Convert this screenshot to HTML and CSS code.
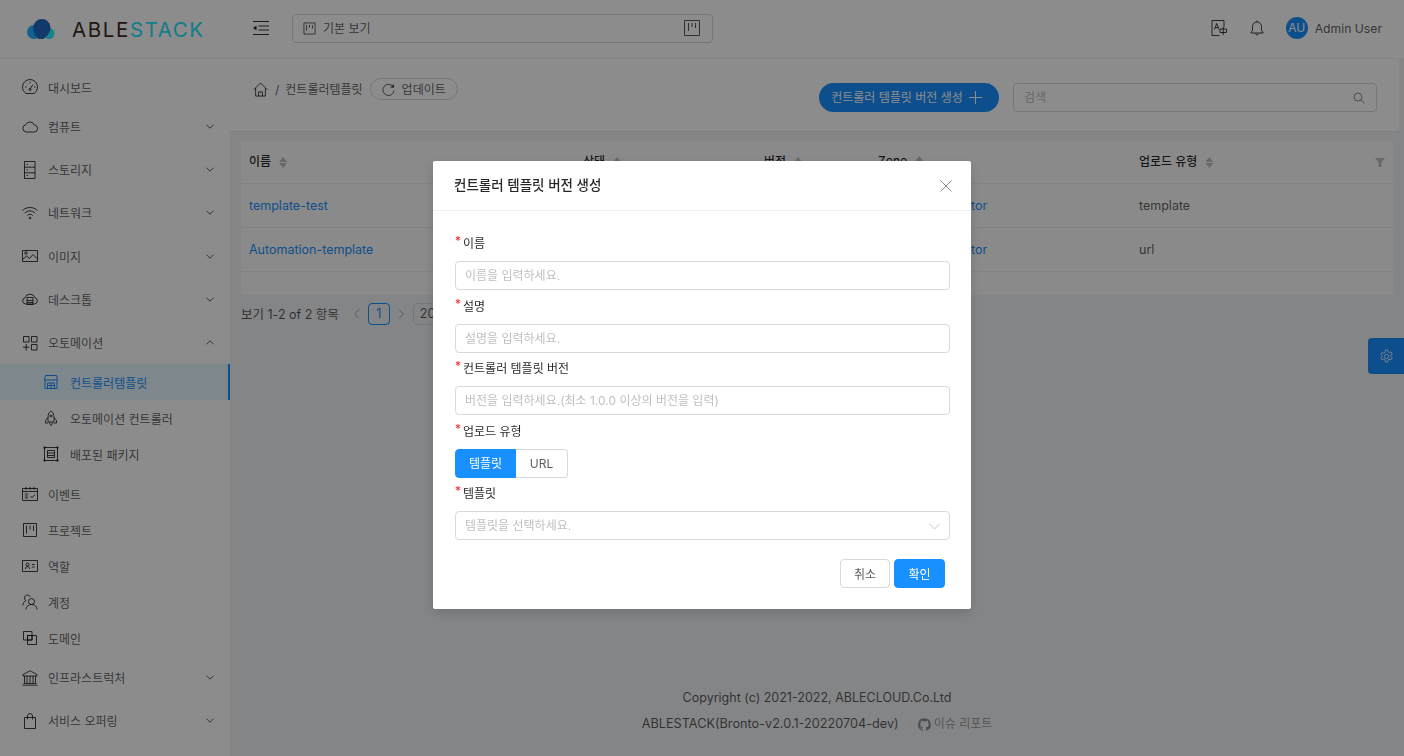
FILE: index.html
```html
<!DOCTYPE html>
<html lang="ko">
<head>
  <meta charset="UTF-8" />
  <title>ABLESTACK</title>
  <link rel="stylesheet" href="styles.css">
</head>
<body>

<div class="layout">
  <aside class="sider">
    <div class="logo">
      <svg class="logo-cloud" viewBox="0 0 28 20">
        <circle cx="7" cy="13" r="7" fill="#26b0ff"/>
        <circle cx="22" cy="14.500" r="5.500" fill="#2af0ff"/>
        <path d="M15 0a8.500 8.500 0 0 1 8.500 8.500c0 4.500-3 8.500-7 11.500h-5C8 17 6.200 13 6.200 8.500A8.800 8.800 0 0 1 15 0z" fill="#2168c3"/>
      </svg>
      <span class="logo-text">ABLE<span class="logo-accent">STACK</span></span>
    </div>
    <nav class="menu">
      <a class="item">
        <svg class="icon" viewBox="0 0 16 16"><path d="M4 14.500h8c1.700-1.100 3.500-3.300 3.500-6.500a7.500 7.500 0 0 0-15 0c0 3.200 1.800 5.400 3.500 6.500z"/><path d="M8 10l3-4.500M3 8h1.500M12 8h1.500M5 4.500l.6.6M8 2.800v1.400"/><circle cx="8" cy="10.500" r="1"/></svg>
        대시보드
      </a>
      <a class="item group">
        <svg class="icon" viewBox="0 0 16 16"><path d="M4.300 13a3.700 3.700 0 0 1-.5-7.300 4.600 4.600 0 0 1 8.500.3 3.500 3.500 0 0 1-.5 7z"/></svg>
        컴퓨트
        <svg class="caret" viewBox="0 0 8 5"><path d="M.5.700L4 4.200 7.500.700"/></svg>
      </a>
      <a class="item group">
        <svg class="icon" viewBox="0 0 16 16"><path d="M2.500 -.5h10.500v17h-10.500zM2.500 5.200h10.500M2.500 10.800h10.500M4.500 2.500h1.500M4.500 8h1.500M4.500 13.500h1.500"/></svg>
        스토리지
        <svg class="caret" viewBox="0 0 8 5"><path d="M.5.700L4 4.200 7.500.700"/></svg>
      </a>
      <a class="item group">
        <svg class="icon" viewBox="0 0 16 16"><path d="M.5 5.500c4-4 11-4 15 0M2.800 8c3-2.800 7.400-2.800 10.400 0M5.200 10.300c1.700-1.300 3.900-1.300 5.600 0"/><circle cx="8" cy="13" r=".9"/></svg>
        네트워크
        <svg class="caret" viewBox="0 0 8 5"><path d="M.5.700L4 4.200 7.500.700"/></svg>
      </a>
      <a class="item group">
        <svg class="icon" viewBox="0 0 16 16"><path d="M.5 2.500h15v11H.5zM.5 11.500l4-3.500 3 2.500 3.500-4 4.500 4.500"/><circle cx="4" cy="5" r="1.200"/></svg>
        이미지
        <svg class="caret" viewBox="0 0 8 5"><path d="M.5.700L4 4.200 7.500.700"/></svg>
      </a>
      <a class="item group">
        <svg class="icon" viewBox="0 0 16 16"><path d="M3.500 13a3.200 3.200 0 0 1-.3-6.300 5 5 0 0 1 9.600 0 3.200 3.200 0 0 1-.3 6.300z"/><path d="M5 6.500h6v7H5zM5 9.500h6M5 11.500h6"/></svg>
        데스크톱
        <svg class="caret" viewBox="0 0 8 5"><path d="M.5.700L4 4.200 7.500.700"/></svg>
      </a>
      <a class="item group">
        <svg class="icon" viewBox="0 0 16 16"><path d="M1.500 1.500h5.500v5.500H1.500zM9.500 1.500h5.500v5.500H9.500zM9.500 9.500h5.500v5.500H9.500zM1 12.200h6.500M4.200 9v6.500"/></svg>
        오토메이션
        <svg class="caret" viewBox="0 0 8 5"><path d="M.5 4.300L4 .8l3.500 3.500"/></svg>
      </a>
      <div class="submenu">
        <a class="item sub active">
          <svg class="icon" viewBox="0 0 16 16"><path d="M2.500 1.500h11l1 4.500h-13zM2 6v8.500h12V6M4.500 9h7v5.500h-7zM4.500 11.500h7M8 9v5.500"/></svg>
          컨트롤러템플릿
        </a>
        <a class="item sub">
          <svg class="icon" viewBox="0 0 16 16"><path d="M8 .8C5.800 2.500 5 5 5 7.500V12h6V7.500C11 5 10.200 2.500 8 .8zM5 7.500L2.500 10.500V13H5M11 7.500l2.500 3V13H11M6.500 12.500c.2 1.200.8 2.200 1.500 3 .7-.8 1.300-1.800 1.500-3"/><circle cx="8" cy="6" r="1"/></svg>
          오토메이션 컨트롤러
        </a>
        <a class="item sub">
          <svg class="icon" viewBox="0 0 16 16"><path d="M1.500 1.500h13v13h-13zM4.500 4.500h7v7h-7zM4.500 7h7M4.500 9.500h7"/><path class="solid" d="M.5.500h2v2h-2zM13.500.5h2v2h-2zM.5 13.500h2v2h-2zM13.500 13.500h2v2h-2z"/></svg>
          배포된 패키지
        </a>
      </div>
      <a class="item">
        <svg class="icon" viewBox="0 0 16 16"><path d="M.5 2.500h15v12H.5zM.5 5.500h15M4 .8v3M8 .8v3M12 .8v3M2.800 8h3.500M2.800 10h3M2.800 12h3.500M8.300 10l1.700 1.800 3-3.300"/></svg>
        이벤트
      </a>
      <a class="item">
        <svg class="icon" viewBox="0 0 16 16"><path d="M1.500 1.500h13v13h-13zM4.500 3.500v8M8 3.500v4M11.500 3.500v5.500"/></svg>
        프로젝트
      </a>
      <a class="item">
        <svg class="icon" viewBox="0 0 16 16"><path d="M.5 2.500h15v11H.5zM3.500 11c0-1.800 1-2.600 2-2.600s2 .8 2 2.600M9.800 6.500h3M9.800 9h3"/><circle cx="5.500" cy="6.500" r="1.500"/></svg>
        역할
      </a>
      <a class="item">
        <svg class="icon" viewBox="0 0 16 16"><circle cx="9.500" cy="7.500" r="3"/><path d="M3.800 15.500c.3-3 2.600-5 5.700-5s5.400 2 5.700 5M8.300 3C7.800 1.700 6.800 1 5.500 1c-1.700 0-3 1.300-3 3 0 1 .5 2 1.300 2.500C2 7.500 1 9.500.8 11.500"/></svg>
        계정
      </a>
      <a class="item">
        <svg class="icon" viewBox="0 0 16 16"><path d="M1.500 1.500h8.500v8.500H1.500zM5.500 5.500h9v9h-9zM5.500 5.500h4.500V10H5.500z"/></svg>
        도메인
      </a>
      <a class="item group">
        <svg class="icon" viewBox="0 0 16 16"><path d="M8 .8L1 4.500v1.500h14V4.500zM2.500 6v7M5 6v7M8 6v7M11 6v7M13.500 6v7M1.500 13.500h13M.5 15.200h15"/></svg>
        인프라스트럭처
        <svg class="caret" viewBox="0 0 8 5"><path d="M.5.700L4 4.200 7.500.700"/></svg>
      </a>
      <a class="item group">
        <svg class="icon" viewBox="0 0 16 16"><path d="M2.500 4.500h11v11h-11zM5.500 6.500V3a2.500 2.500 0 0 1 5 0v3.500"/></svg>
        서비스 오퍼링
        <svg class="caret" viewBox="0 0 8 5"><path d="M.5.700L4 4.200 7.500.700"/></svg>
      </a>
    </nav>
  </aside>

  <main class="main">
    <header class="topbar">
      <svg class="collapse" viewBox="0 0 16 14"><path d="M0 .5h16M5.500 5h10.500M5.500 9h10.500M0 13.500h16"/><path class="solid" d="M3.500 4.500v5L0 7z"/></svg>
      <div class="view-select">
        <svg class="icon-small" viewBox="0 0 14 14"><path d="M1 1h12v12H1zM3.800 3.200v6M7 3.200v3M10.200 3.200v4"/></svg>
        <span>기본 보기</span>
        <svg class="view-icon" viewBox="0 0 16 16"><path d="M.5.500h15v15H.5zM4.500 3v8M8 3v4M11.500 3v5"/></svg>
      </div>
      <div class="top-actions">
        <svg class="icon translate" viewBox="0 0 16 16"><path d="M13 7V.5H1V15.500h7.500"/><path d="M3.500 9.500L5.700 3.500 8 9.500M4.300 7.600h2.800M9 9h6.500v3.500H9zM12.200 7v8"/></svg>
        <svg class="icon bell" viewBox="0 0 16 16"><path d="M2 13h12v-.8l-1.500-1.700V6.500A4.500 4.500 0 0 0 8 2a4.500 4.500 0 0 0-4.500 4.500v4L2 12.200zM8 2V.5M6.500 13.500c.2.900.8 1.500 1.500 1.500s1.300-.6 1.500-1.500"/></svg>
        <span class="avatar">AU</span>
        <span class="username">Admin User</span>
      </div>
    </header>

    <section class="toolbar">
      <div class="crumbs">
        <svg class="icon home" viewBox="0 0 16 16"><path d="M.8 8.200L8 1l7.200 7.200M2.800 6.500v8.500h10.400V6.500M6 15v-4.500h4V15"/></svg>
        <span class="sep">/</span>
        <span class="crumb-text">컨트롤러템플릿</span>
        <button class="refresh">
          <svg class="icon-small" viewBox="0 0 14 14"><path d="M12.200 4.400A6 6 0 1 0 13 8"/><path class="solid" d="M13 .8v4.200H8.800z"/></svg>
          <span class="crumb-text">업데이트</span>
        </button>
      </div>
      <div class="tools">
        <button class="create"><span>컨트롤러 템플릿 버전 생성</span>
          <svg class="plus" viewBox="0 0 13 13"><path d="M6.500 0v13M0 6.500h13"/></svg>
        </button>
        <div class="search">
          <span class="search-text">검색</span>
          <svg class="search-icon" viewBox="0 0 12 12"><circle cx="5" cy="5" r="4"/><path d="M8 8l3.500 3.500"/></svg>
        </div>
      </div>
    </section>

    <section class="card">
      <table class="grid">
        <colgroup><col class="c-name"><col class="c-state"><col class="c-ver"><col class="c-zone"><col></colgroup>
        <thead>
          <tr>
            <th>이름<span class="sorter"></span></th>
            <th>상태<span class="sorter"></span></th>
            <th>버전<span class="sorter"></span></th>
            <th>Zone<span class="sorter"></span></th>
            <th>업로드 유형<span class="sorter"></span><span class="filter"></span></th>
          </tr>
        </thead>
        <tbody>
          <tr>
            <td><a>template-test</a></td>
            <td>Active</td>
            <td>1.0.0</td>
            <td class="owner"><a>Administrator</a></td>
            <td>template</td>
          </tr>
          <tr>
            <td><a>Automation-template</a></td>
            <td>Active</td>
            <td>1.0.0</td>
            <td class="owner"><a>Administrator</a></td>
            <td>url</td>
          </tr>
        </tbody>
      </table>
    </section>

    <div class="pager">
      <span class="total">보기 1-2 of 2 항목</span>
      <svg class="page-arrow" viewBox="0 0 6 10"><path d="M5 .5L.8 5 5 9.500"/></svg>
      <span class="page-num">1</span>
      <svg class="page-arrow" viewBox="0 0 6 10"><path d="M1 .5L5.200 5 1 9.500"/></svg>
      <span class="page-size">20 / 페이지</span>
    </div>

    <footer class="footer">
      <div>Copyright (c) 2021-2022, ABLECLOUD.Co.Ltd</div>
      <div class="version">ABLESTACK(Bronto-v2.0.1-20220704-dev)
        <span class="divider"></span>
        <svg class="github" viewBox="0 0 16 16"><path d="M8 .2a8 8 0 0 0-2.500 15.600c.4.100.5-.2.500-.4v-1.400c-2.200.5-2.700-1-2.700-1-.4-.9-.9-1.200-.9-1.200-.7-.5.100-.5.100-.5.800.100 1.200.8 1.200.8.700 1.200 1.900.9 2.300.7.100-.5.300-.9.500-1.100-1.800-.2-3.600-.9-3.600-4 0-.9.300-1.600.8-2.100-.1-.2-.4-1 .1-2.100 0 0 .7-.2 2.200.8a7.600 7.600 0 0 1 4 0c1.500-1 2.200-.8 2.200-.8.400 1.100.2 1.900.1 2.100.5.600.8 1.300.8 2.100 0 3.100-1.900 3.700-3.700 3.900.3.300.6.800.6 1.500v2.200c0 .2.100.5.600.4A8 8 0 0 0 8 .2z"/></svg>
        <span class="issue">이슈 리포트</span>
      </div>
    </footer>
  </main>

  <button class="setting">
    <svg viewBox="0 0 16 16"><path d="M6.800 1h2.400l.4 2 1.400.8 1.900-.7 1.200 2.100-1.500 1.300v1.600l1.500 1.300-1.200 2.100-1.900-.7-1.400.8-.4 2.400H6.800l-.4-2.400-1.400-.8-1.900.7-1.200-2.100 1.500-1.300V7.200L1.900 5.900l1.200-2.100 1.900.7 1.400-.8z"/><circle cx="8" cy="8" r="2.300"/></svg>
  </button>
</div>

<div class="mask">
  <div class="modal">
    <div class="modal-head">
      <span class="modal-title">컨트롤러 템플릿 버전 생성</span>
      <svg class="modal-close" viewBox="0 0 12 12"><path d="M.5.500l11 11M11.500.5l-11 11"/></svg>
    </div>
    <form class="modal-body">
      <div class="field">
        <label class="label">이름</label>
        <div class="input">이름을 입력하세요.</div>
      </div>
      <div class="field">
        <label class="label">설명</label>
        <div class="input">설명을 입력하세요.</div>
      </div>
      <div class="field">
        <label class="label">컨트롤러 템플릿 버전</label>
        <div class="input">버전을 입력하세요.(최소 1.0.0 이상의 버전을 입력)</div>
      </div>
      <div class="field">
        <label class="label">업로드 유형</label>
        <div class="radios">
          <span class="radio checked">템플릿</span>
          <span class="radio">URL</span>
        </div>
      </div>
      <div class="field">
        <label class="label">템플릿</label>
        <div class="input select">템플릿을 선택하세요.
          <svg class="select-arrow" viewBox="0 0 12 7"><path d="M.5.700L6 6.200 11.500.700"/></svg>
        </div>
      </div>
      <div class="modal-actions">
        <button type="button" class="btn">취소</button>
        <button type="button" class="btn primary">확인</button>
      </div>
    </form>
  </div>
</div>

</body>
</html>
```

FILE: styles.css
```css
* {
  box-sizing: border-box;
}

html, body {
  height: 100%;
}

body {
  margin: 0;
  overflow: hidden;
  font-family: Inter, "Noto Sans CJK KR", sans-serif;
  font-size: 12.500px;
  color: rgba(0,0,0,0.65);
  background: #f0f2f5;
}

svg {
  flex: none;
  fill: none;
  stroke: currentColor;
  stroke-width: 1;
  overflow: visible;
}

svg .solid {
  fill: currentColor;
  stroke: none;
}

button {
  font: inherit;
  color: inherit;
  border: none;
  background: none;
  padding: 0;
}

a {
  color: #1890ff;
}

.layout {
  position: relative;
  display: flex;
  height: 756px;
}

/* sidebar */
.sider {
  flex: none;
  width: 230px;
  background: white;
}

.logo {
  display: flex;
  align-items: center;
  height: 59px;
  padding-left: 27px;
  border-bottom: 1px solid #f0f0f0;
}

.logo-cloud {
  width: 28px;
  height: 20px;
  stroke: none;
}

.logo-text {
  margin-left: 17px;
  font-size: 20.500px;
  letter-spacing: 1.600px;
  color: #3f2b26;
}

.logo-accent {
  color: #1de3ff;
}

.menu {
  padding-top: 10px;
}

.item {
  display: flex;
  align-items: center;
  height: 36px;
  padding-left: 22px;
  padding-right: 16px;
  font-size: 12px;
  color: rgba(0,0,0,0.65);
}

.item.group {
  height: 43.200px;
}

.item .icon {
  margin-right: 10px;
}

.icon {
  width: 16px;
  height: 16px;
  color: rgba(0,0,0,0.75);
}

.icon-small {
  width: 13px;
  height: 13px;
}

.caret {
  width: 8px;
  height: 5px;
  margin-left: auto;
}

.submenu {
  margin-bottom: 4px;
}

.item.sub {
  padding-left: 43px;
}

.item.sub .icon {
  margin-right: 11px;
}

.item.active {
  color: #1890ff;
  background: #e6f7ff;
  border-right: 2px solid #1890ff;
}

.item.active .icon {
  color: #1890ff;
}

/* main column */
.main {
  flex: 1;
  min-width: 0;
  display: flex;
  flex-direction: column;
}

.topbar {
  flex: none;
  display: flex;
  align-items: center;
  height: 59px;
  padding: 0 22px 2px 23px;
  background: white;
  border-bottom: 1px solid #f0f0f0;
}

.collapse {
  width: 16px;
  height: 14px;
  margin-right: 23px;
  color: rgba(0,0,0,0.8);
}

.view-select {
  display: flex;
  align-items: center;
  width: 421px;
  height: 29px;
  padding: 0 12px 0 10px;
  font-size: 12px;
  border: 1px solid #d9d9d9;
  border-radius: 4px;
}

.view-select span {
  margin-left: 7px;
  padding-bottom: 2px;
}

.view-icon {
  width: 16px;
  height: 16px;
  margin-left: auto;
}

.top-actions {
  display: flex;
  align-items: center;
  margin-left: auto;
}

.translate {
  margin-right: 22px;
}

.bell {
  margin-right: 21px;
}

.avatar {
  width: 22px;
  height: 22px;
  margin-right: 7px;
  line-height: 22px;
  text-align: center;
  font-size: 12px;
  color: white;
  background: #1890ff;
  border-radius: 50%;
}

.username {
  font-size: 12.200px;
}

.toolbar {
  flex: none;
  display: flex;
  justify-content: space-between;
  height: 73px;
  margin-right: 5px;
  padding: 19px 22px 0 23px;
  background: white;
  border-bottom: 1px solid #e8e8e8;
  border-radius: 0 0 4px 0;
}

.crumbs {
  display: flex;
  align-items: center;
  height: 22px;
  font-size: 12px;
}

.crumb-text {
  padding-bottom: 2px;
}

.home {
  width: 15px;
  height: 15px;
}

.sep {
  margin: 0 6px 0 7px;
}

.refresh {
  display: flex;
  align-items: center;
  gap: 7px;
  height: 22px;
  margin-left: 7px;
  padding: 0 11px;
  font-size: 12px;
  background: white;
  border: 1px solid #d9d9d9;
  border-radius: 11px;
}

.tools {
  display: flex;
  gap: 14px;
  margin-top: 5px;
}

.create {
  display: flex;
  align-items: center;
  justify-content: center;
  gap: 6px;
  width: 180px;
  height: 29px;
  padding-right: 5px;
  font-size: 12px;
  color: white;
  background: #1890ff;
  border-radius: 15px;
}

.create span,
.search-text {
  padding-bottom: 3px;
}

.plus {
  width: 13px;
  height: 13px;
}

.search {
  display: flex;
  align-items: center;
  justify-content: space-between;
  width: 364px;
  height: 29px;
  padding: 0 11px 0 10px;
  font-size: 12px;
  color: #bfbfbf;
  border: 1px solid #d9d9d9;
  border-radius: 4px;
}

.search-icon {
  width: 12px;
  height: 12px;
  color: rgba(0,0,0,0.45);
}

/* table */
.card {
  flex: none;
  height: 154px;
  margin: 9px 11px 0;
  background: #fcfcfc;
}

.grid {
  width: 100%;
  table-layout: fixed;
  border-collapse: collapse;
}

.c-name { width: 334px; }
.c-state { width: 181px; }
.c-ver { width: 114px; }
.c-zone { width: 261px; }

.grid th {
  position: relative;
  height: 42px;
  padding: 0 8px 3px;
  font-size: 12px;
  font-weight: 500;
  text-align: left;
  color: rgba(0,0,0,0.85);
  border-bottom: 1px solid #eeeeee;
}

.grid td {
  height: 44px;
  padding: 0 8px;
  border-bottom: 1px solid #eeeeee;
}

.grid td.owner {
  padding-left: 38px;
}

.sorter {
  display: inline-block;
  vertical-align: middle;
  width: 8px;
  height: 11px;
  margin-left: 8px;
  background: #bfbfbf;
  clip-path: path("M4 0L8 5H0zM0 6H8L4 11z");
}

.filter {
  position: absolute;
  top: 17px;
  right: 8px;
  width: 10px;
  height: 9px;
  background: #bfbfbf;
  clip-path: polygon(0 0, 100% 0, 65% 50%, 65% 100%, 35% 100%, 35% 50%);
}

/* pagination */
.pager {
  flex: none;
  display: flex;
  align-items: center;
  height: 22px;
  margin: 8px 0 0 11px;
}

.total {
  margin-right: 15px;
  padding-bottom: 2px;
}

.page-arrow {
  width: 6px;
  height: 10px;
  color: rgba(0,0,0,0.3);
}

.page-num {
  width: 22px;
  height: 22px;
  margin: 0 8px;
  line-height: 20px;
  text-align: center;
  color: #1890ff;
  border: 1px solid #1890ff;
  border-radius: 4px;
}

.page-size {
  height: 22px;
  margin-left: 9px;
  padding: 0 6px;
  line-height: 20px;
  border: 1px solid #d9d9d9;
  border-radius: 4px;
}

.footer {
  margin-top: auto;
  padding-bottom: 19px;
  text-align: center;
  line-height: 26px;
}

.version {
  display: flex;
  align-items: center;
  justify-content: center;
  font-size: 12.700px;
}

.divider {
  width: 1px;
  height: 12px;
  margin: 0 7px 0 11px;
  background: #e8e8e8;
}

.github {
  width: 13px;
  height: 13px;
  margin-right: 3px;
  fill: rgba(0,0,0,0.4);
  stroke: none;
}

.issue {
  font-size: 12px;
  color: rgba(0,0,0,0.4);
}

.setting {
  position: absolute;
  top: 338px;
  right: 0;
  display: flex;
  align-items: center;
  justify-content: center;
  width: 36px;
  height: 36px;
  color: rgba(255,255,255,0.85);
  background: #1890ff;
  border-radius: 4px 0 0 4px;
}

.setting svg {
  width: 15px;
  height: 15px;
}

/* modal */
.mask {
  position: fixed;
  inset: 0;
  display: flex;
  justify-content: center;
  align-items: flex-start;
  background: rgba(0,0,0,0.45);
}

.modal {
  width: 538px;
  height: 448px;
  margin-top: 161px;
  background: white;
  border-radius: 2px;
  box-shadow: 0 4px 12px rgba(0,0,0,0.15);
}

.modal-head {
  display: flex;
  align-items: center;
  justify-content: space-between;
  height: 50px;
  padding: 0 19px 0 21px;
  border-bottom: 1px solid #f0f0f0;
}

.modal-title {
  padding-bottom: 3px;
  font-size: 13.500px;
  font-weight: 500;
  color: rgba(0,0,0,0.85);
}

.modal-close {
  width: 12px;
  height: 12px;
  color: rgba(0,0,0,0.45);
}

.modal-body {
  padding: 20px 21px 0 22px;
}

.field {
  height: 62.500px;
}

.label {
  display: block;
  height: 30px;
  line-height: 26px;
  font-size: 12px;
  color: rgba(0,0,0,0.85);
}

.label::before {
  content: "*";
  position: relative;
  top: -3px;
  margin-right: 2px;
  color: #f5222d;
}

.input {
  position: relative;
  height: 29px;
  padding: 0 9px;
  line-height: 27px;
  font-size: 12px;
  color: #bfbfbf;
  border: 1px solid #d9d9d9;
  border-radius: 4px;
}

.select-arrow {
  position: absolute;
  top: 11px;
  right: 9px;
  width: 11px;
  height: 7px;
}

.radios {
  display: flex;
}

.radio {
  width: 52px;
  height: 29px;
  line-height: 27px;
  text-align: center;
  font-size: 12px;
  border: 1px solid #d9d9d9;
  border-left: none;
  border-radius: 0 4px 4px 0;
}

.radio.checked {
  width: 61px;
  color: white;
  background: #1890ff;
  border: 1px solid #1890ff;
  border-radius: 4px 0 0 4px;
}

.modal-actions {
  display: flex;
  justify-content: flex-end;
  gap: 4px;
  margin-top: 15px;
  padding-right: 5px;
}

.btn {
  width: 50px;
  height: 29px;
  font-size: 12px;
  background: white;
  border: 1px solid #d9d9d9;
  border-radius: 4px;
}

.btn.primary {
  width: 51px;
  color: white;
  background: #1890ff;
  border-color: #1890ff;
}
```
